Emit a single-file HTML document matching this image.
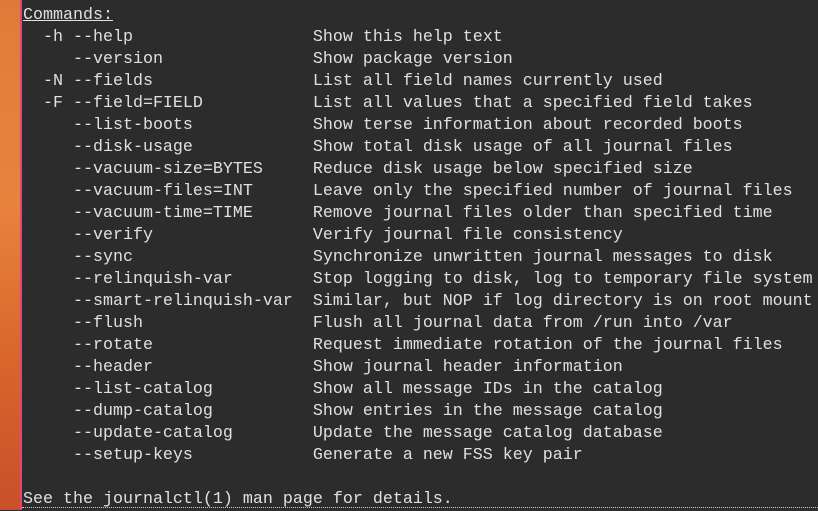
<!DOCTYPE html>
<html><head><meta charset="utf-8"><style>
html,body{margin:0;padding:0;width:818px;height:510px;overflow:hidden;background:#2c2c2c}
.side{position:absolute;left:0;top:0;width:20px;height:510px;background:linear-gradient(180deg,#e07a3a 0%,#e8833e 40%,#d9662c 70%,#c9502a 100%)}
.pink{position:absolute;left:20px;top:0;width:2px;height:510px;background:#e0457b}
pre{position:absolute;left:23px;top:5px;margin:0;font-family:"Liberation Mono",monospace;font-size:16.67px;line-height:22px;color:#e0e0dc;white-space:pre}
u{text-decoration:underline}
.dots{position:absolute;left:22px;right:0;top:507px;border-top:1px dotted #ccc}
</style></head><body>
<div class="side"></div><div class="pink"></div>
<pre><u>Commands:</u>
  -h --help                  Show this help text
     --version               Show package version
  -N --fields                List all field names currently used
  -F --field=FIELD           List all values that a specified field takes
     --list-boots            Show terse information about recorded boots
     --disk-usage            Show total disk usage of all journal files
     --vacuum-size=BYTES     Reduce disk usage below specified size
     --vacuum-files=INT      Leave only the specified number of journal files
     --vacuum-time=TIME      Remove journal files older than specified time
     --verify                Verify journal file consistency
     --sync                  Synchronize unwritten journal messages to disk
     --relinquish-var        Stop logging to disk, log to temporary file system
     --smart-relinquish-var  Similar, but NOP if log directory is on root mount
     --flush                 Flush all journal data from /run into /var
     --rotate                Request immediate rotation of the journal files
     --header                Show journal header information
     --list-catalog          Show all message IDs in the catalog
     --dump-catalog          Show entries in the message catalog
     --update-catalog        Update the message catalog database
     --setup-keys            Generate a new FSS key pair

See the journalctl(1) man page for details.</pre>
<div class="dots"></div>
</body></html>
